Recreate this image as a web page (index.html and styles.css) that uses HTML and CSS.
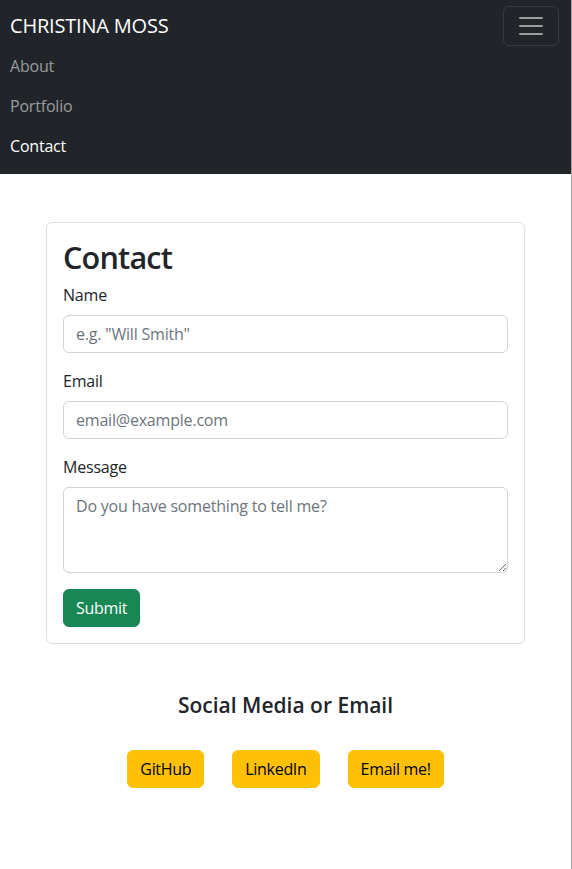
FILE: index.html
```html
<!DOCTYPE html>
<html lang="en">
<head>
<meta charset="utf-8">
<title>Christina Moss - Contact</title>
<link rel="stylesheet" href="styles.css">
</head>
<body>
<nav class="navbar">
  <div class="navbar-top">
    <a class="brand" href="#">CHRISTINA MOSS</a>
    <button class="toggler" type="button" aria-label="Toggle navigation">
      <svg width="30" height="30" viewBox="0 0 30 30"><path d="M4 7h22M4 15h22M4 23h22" stroke="rgba(255,255,255,0.55)" stroke-width="2" stroke-linecap="round" stroke-miterlimit="10"/></svg>
    </button>
  </div>
  <ul class="nav-list">
    <li><a class="nav-link" href="#">About</a></li>
    <li><a class="nav-link" href="#">Portfolio</a></li>
    <li><a class="nav-link active" href="#">Contact</a></li>
  </ul>
</nav>

<main class="main">
  <section class="card">
    <h1 class="card-title">Contact</h1>
    <form class="form">
      <div class="field">
        <label class="label" for="name">Name</label>
        <input class="control" id="name" type="text" placeholder="e.g. &quot;Will Smith&quot;">
      </div>
      <div class="field">
        <label class="label" for="email">Email</label>
        <input class="control" id="email" type="email" placeholder="email@example.com">
      </div>
      <div class="field">
        <label class="label" for="msg">Message</label>
        <textarea class="control textarea" id="msg" rows="3" placeholder="Do you have something to tell me?"></textarea>
      </div>
      <button class="btn btn-success" type="button">Submit</button>
    </form>
  </section>

  <section class="social">
    <h4 class="social-title">Social Media or Email</h4>
    <div class="social-buttons">
      <a class="btn btn-warning" href="#">GitHub</a>
      <a class="btn btn-warning" href="#">LinkedIn</a>
      <a class="btn btn-warning" href="#">Email me!</a>
    </div>
  </section>
</main>
</body>
</html>
```

FILE: styles.css
```css
* { box-sizing: border-box; }

html {
  background: #a3a3a3;
}

body {
  margin: 0 1px 0 0;
  min-height: 869px;
  background: #fff;
  font-family: "Open Sans", "Noto Sans", sans-serif;
  font-size: 16px;
  line-height: 1.5;
  letter-spacing: -0.2px;
  color: #212529;
}

.navbar {
  background: #212529;
  padding: 6px 12px 8px 10px;
}

.navbar-top {
  display: flex;
  align-items: center;
  justify-content: space-between;
}

.brand {
  color: #fff;
  text-decoration: none;
  font-size: 20px;
  line-height: 30px;
  padding: 5px 0;
}

.toggler {
  width: 56px;
  height: 40px;
  padding: 4px 12px;
  background: transparent;
  border: 1px solid rgba(255,255,255,0.1);
  border-radius: 6px;
  display: flex;
  align-items: center;
  justify-content: center;
}

.toggler svg { display: block; }

.nav-list {
  list-style: none;
  margin: 0;
  padding: 0;
}

.nav-link {
  display: block;
  padding: 8px 0;
  line-height: 24px;
  color: rgba(255,255,255,0.55);
  text-decoration: none;
}

.nav-link.active { color: #fff; }

.main {
  padding-top: 48px;
}

.card {
  width: 479px;
  margin: 0 auto;
  border: 1px solid #dfdfdf;
  border-radius: 6px;
  padding: 16px;
}

.card-title {
  margin: 0 0 8px;
  font-size: 30.6px;
  font-weight: 600;
  line-height: 36px;
  letter-spacing: -0.8px;
  color: #212529;
}

.field { margin-bottom: 16px; }

.label {
  display: block;
  margin-bottom: 8px;
  line-height: 24px;
}

.control {
  display: block;
  width: 100%;
  padding: 6px 12px;
  font-family: inherit;
  font-size: 16px;
  line-height: 24px;
  letter-spacing: -0.2px;
  color: #212529;
  background: #fff;
  border: 1px solid #ced4da;
  border-radius: 6px;
  height: 38px;
}

.control::placeholder { color: #6c757d; opacity: 1; }

.textarea {
  height: 86px;
  resize: vertical;
}

.btn {
  display: inline-block;
  padding: 6px 12px;
  font-family: inherit;
  font-size: 16px;
  line-height: 24px;
  letter-spacing: -0.3px;
  border: 1px solid transparent;
  border-radius: 6px;
  text-decoration: none;
  text-align: center;
}

.btn-success {
  background: #198754;
  border-color: #198754;
  color: #fff;
}

.btn-warning {
  background: #ffc107;
  border-color: #ffc107;
  color: #000;
}

.social {
  margin-top: 48px;
  text-align: center;
}

.social-title {
  margin: 0;
  font-size: 21px;
  font-weight: 600;
  line-height: 26px;
  letter-spacing: 0;
}

.social-buttons {
  margin-top: 32px;
  display: flex;
  justify-content: center;
  gap: 28px;
}
```
